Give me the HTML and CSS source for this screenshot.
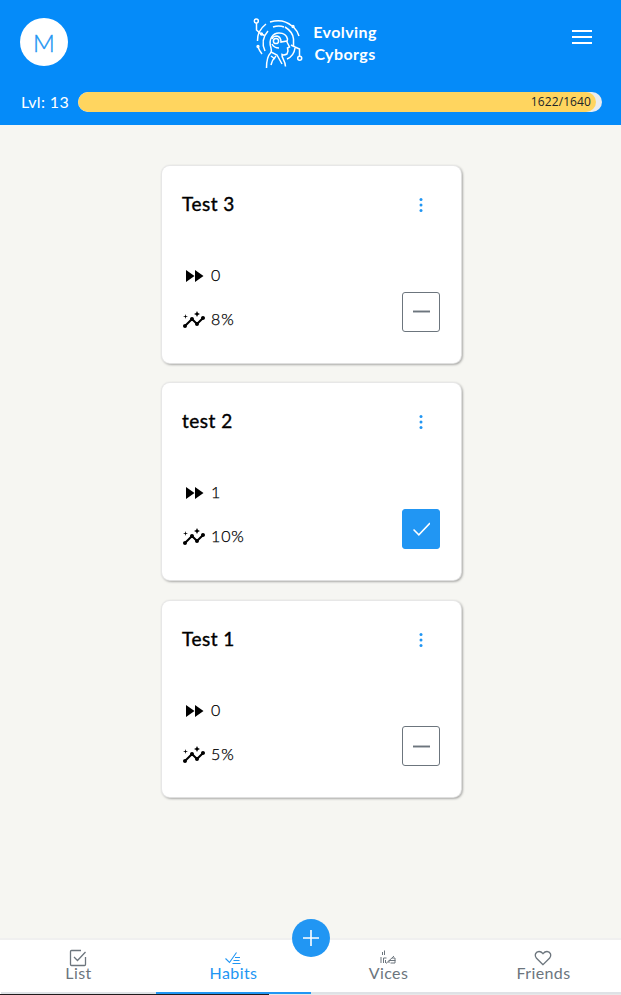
FILE: index.html
```
<!DOCTYPE html>
<html lang="en">
<head>
<meta charset="utf-8">
<title>Evolving Cyborgs</title>
<link rel="stylesheet" href="styles.css">
</head>
<body>
<svg class="defs" width="0" height="0">
  <symbol id="forward" viewBox="0 0 24 24"><path d="M4 18l8.500-6L4 6zM13 6v12l8.500-6z" fill="#000"/></symbol>
  <symbol id="insights" viewBox="0 0 24 24"><path d="M21 8c-1.450 0-2.260 1.440-1.930 2.510l-3.550 3.560c-.3-.09-.74-.09-1.040 0l-2.550-2.550C12.270 10.450 11.460 9 10 9c-1.450 0-2.270 1.440-1.930 2.520l-4.560 4.550C2.440 15.740 1 16.550 1 18c0 1.100.9 2 2 2 1.450 0 2.260-1.440 1.930-2.510l4.550-4.560c.3.090.74.090 1.040 0l2.550 2.550C12.730 16.550 13.540 18 15 18c1.450 0 2.270-1.440 1.930-2.520l3.560-3.550C21.560 12.260 23 11.450 23 10c0-1.100-.9-2-2-2zM15 9l.94-2.070L18 6l-2.060-.93L15 3l-.92 2.070L12 6l2.080.93zM3.500 11L4 9l2-.5L4 8l-.5-2L3 8l-2 .5L3 9z" fill="#000"/></symbol>
  <symbol id="dots" viewBox="0 0 4 16"><g fill="#2196f3"><circle cx="2" cy="2.500" r="1.500"/><circle cx="2" cy="8" r="1.500"/><circle cx="2" cy="13.500" r="1.500"/></g></symbol>
</svg>
<div class="app">
  <header class="header">
    <div class="top">
      <div class="avatar"><span>M</span></div>
      <div class="brand">
        <svg class="logo" viewBox="0 0 60 60" fill="none" stroke="#fff" stroke-width="1.500">
          <circle cx="6.300" cy="9" r="2"/><circle cx="49.700" cy="46.300" r="2"/>
          <path d="M6.500 11v7l4 3.500 4 2M41 33l4 2 4.500 2v7"/>
          <path d="M20 10Q33 6 42 14M43.500 15q4 4 5.500 9M16 12Q7 19 7.500 29M8 35q1.500 4 4 7M18 19q-8 9-3 20M23 15q6-2 11 0M35 15q8 5 8.500 12v7M37 47q7-3 8-11"/>
          <circle cx="43" cy="14.500" r=".9"/><circle cx="8" cy="34.500" r=".9"/><circle cx="11.500" cy="22" r=".9"/>
          <path d="M16.500 56q0-11 4-15Q22 39 21 36C18 27 23 21 29 21q7 0 8.500 6l-.5 3 2.500 5-2 1 .5 3-1 3q-3 1.500-5 .5c-.500 4 3 5 3.500 12"/>
          <path d="M22 27q1-3 5-3 4 1 4 6l6-1M22 32q2 4 7 4M21 40l6 3 5 9M26 44q-4 4-5 9M21 44l4 3"/>
          <circle cx="26" cy="29" r="2.600"/>
        </svg>
        <div class="name"><span>Evolving</span><span>Cyborgs</span></div>
      </div>
      <div class="menu"><i></i><i></i><i></i></div>
    </div>
    <div class="level">
      <span class="lvl">Lvl: 13</span>
      <div class="track"><div class="fill"><span>1622/1640</span></div></div>
    </div>
  </header>
  <main class="cards">
    <section class="card">
      <div class="head"><h2>Test 3</h2><svg class="dots"><use href="#dots"/></svg></div>
      <div class="body">
        <div class="stats">
          <div class="stat"><svg><use href="#forward"/></svg><span>0</span></div>
          <div class="stat"><svg><use href="#insights"/></svg><span>8%</span></div>
        </div>
        <button class="toggle"><svg viewBox="0 0 16 16"><path d="M0 8h16" stroke-width="1.800"/></svg></button>
      </div>
    </section>
    <section class="card">
      <div class="head"><h2>test 2</h2><svg class="dots"><use href="#dots"/></svg></div>
      <div class="body">
        <div class="stats">
          <div class="stat"><svg><use href="#forward"/></svg><span>1</span></div>
          <div class="stat"><svg><use href="#insights"/></svg><span>10%</span></div>
        </div>
        <button class="toggle done"><svg viewBox="0 0 16 16"><path d="M.5 8l5 5L16 2" stroke-width="1.400"/></svg></button>
      </div>
    </section>
    <section class="card">
      <div class="head"><h2>Test 1</h2><svg class="dots"><use href="#dots"/></svg></div>
      <div class="body">
        <div class="stats">
          <div class="stat"><svg><use href="#forward"/></svg><span>0</span></div>
          <div class="stat"><svg><use href="#insights"/></svg><span>5%</span></div>
        </div>
        <button class="toggle"><svg viewBox="0 0 16 16"><path d="M0 8h16" stroke-width="1.800"/></svg></button>
      </div>
    </section>
  </main>
  <nav class="tabs">
    <a class="tab"><svg viewBox="0 0 18 18"><path d="M12 1.500H2.500Q1.500 1.500 1.500 2.500v13q0 1 1 1h13q1 0 1-1V8M5 8l3.500 3.500L16.500 3"/></svg><span>List</span></a>
    <a class="tab active"><svg viewBox="0 0 18 18"><path d="M1.500 9.500l4 4L12.500 3.500M11 8.500h5M9.500 11.500h6M8.500 14.500h8" stroke-width="1.100"/></svg><span>Habits</span></a>
    <a class="tab"><svg viewBox="0 0 18 18"><path d="M3.500 3v3M5.500 1.500V6M2 8v6M4.500 14V9h3M6.500 11v3M7 14.500l8-7.500M10 14v-2.500h6.500M11.500 14H16V9h-3" stroke-width="1"/></svg><span>Vices</span></a>
    <a class="tab"><svg viewBox="0 0 18 18"><path d="M9 15.700L2.300 9C.2 6 1.700 2.500 5 2.500c2 0 3 1 4 2.200 1-1.200 2-2.200 4-2.200C16.300 2.500 17.800 6 15.700 9z"/></svg><span>Friends</span></a>
    <button class="add"><svg viewBox="0 0 16 16"><path d="M8 0v16M0 8h16"/></svg></button>
  </nav>
  <div class="strip"></div>
</div>
</body>
</html>
```
FILE: styles.css
```
* { box-sizing: border-box; }
body { margin: 0; font-family: Lato, sans-serif; font-size: 16px; color: #000; }
.defs { display: block; }
.app { height: 995px; display: flex; flex-direction: column; background: #f6f6f2; overflow: hidden; }
.header { height: 125px; background: #058bf9; color: #fff; padding: 18px 19px 0 20px; }
.top { display: flex; justify-content: space-between; height: 66px; }
.avatar { width: 48px; height: 48px; border-radius: 50%; background: #fff; color: #2196f3; display: flex; align-items: center; justify-content: center; font-size: 24px; font-weight: 300; padding-top: 1px; -webkit-text-stroke: .4px #2196f3; }
.brand { display: flex; margin: -6px 14px 0 4px; }
.logo { width: 60px; height: 60px; }
.name { display: flex; flex-direction: column; align-items: center; width: 70px; margin-top: 9px; font-weight: 700; line-height: 22px; letter-spacing: .4px; }
.name span { white-space: nowrap; }
.menu { display: flex; flex-direction: column; gap: 4px; width: 20px; margin: 12px 10px 0 0; }
.menu i { height: 2px; background: #fff; }
.level { display: flex; align-items: center; height: 36px; }
.lvl { width: 58px; padding: 0 0 2px 1px; white-space: nowrap; letter-spacing: .4px; }
.track { width: 524px; height: 20px; border-radius: 10px; background: #e9ecef; overflow: hidden; }
.fill { width: 518px; height: 20px; border-radius: 10px; background: #ffd55f; color: #212529; font-family: "Open Sans", sans-serif; font-size: 12px; line-height: 20px; text-align: right; padding-right: 5px; letter-spacing: .1px; }
.cards { flex: 1; display: flex; flex-direction: column; gap: 20.900px; align-items: center; padding: 41.200px 0 0 2px; }
.card { width: 299px; height: 196.400px; flex: none; background: #fff; border-radius: 8px; box-shadow: 0 0 1px .5px #e8e8e8, 1px 1px 3px rgba(0,0,0,.65); padding: 27px 21px 0 20px; }
.head { display: flex; justify-content: space-between; height: 56px; }
h2 { margin: -1px 0 0; font-size: 19px; line-height: 24px; font-weight: 400; letter-spacing: .5px; -webkit-text-stroke: .4px #000; }
.dots { width: 4px; height: 16px; margin: 4px 17px 0 0; }
.body { display: flex; justify-content: space-between; }
.stats { display: flex; flex-direction: column; gap: 20px; margin-top: 15px; }
.stat { display: flex; align-items: center; height: 24px; letter-spacing: .9px; font-weight: 300; -webkit-text-stroke: .25px #000; }
.stat span { margin-top: -3px; }
.stat svg { width: 24px; height: 24px; margin-right: 5px; }
.toggle { width: 38px; height: 40px; margin: 42.700px 0 0; padding: 0; border: 1px solid #6c757d; border-radius: 3px; background: #fff; display: flex; align-items: center; justify-content: center; }
.toggle svg { width: 17px; height: 17px; fill: none; stroke: #6c757d; }
.toggle.done { background: #2196f3; border-color: #2196f3; }
.toggle.done svg { stroke: #fff; }
.tabs { position: relative; height: 56px; display: flex; background: #fff; border-top: 2px solid #f0f0f0; padding-left: 1px; }
.tab { flex: 1; display: flex; flex-direction: column; align-items: center; color: #6c757d; border-bottom: 2px solid #dee2e6; padding-top: 9px; line-height: 16px; letter-spacing: .4px; }
.tab svg { width: 18px; height: 18px; flex: none; margin-right: 2px; fill: none; stroke: currentColor; stroke-width: 1.300; }
.tab span { margin-top: -2px; }
.tab.active { color: #2196f3; border-color: #2196f3; }
.add { position: absolute; left: 292px; top: -21px; width: 38px; height: 38px; border: 0; border-radius: 50%; padding: 0; background: #2196f3; display: flex; align-items: center; justify-content: center; }
.add svg { width: 16px; height: 16px; stroke: #fff; stroke-width: 1.600; }
.strip { height: 1px; background: linear-gradient(90deg, #211b1c 269px, #e8e8e8 269px); }
```
